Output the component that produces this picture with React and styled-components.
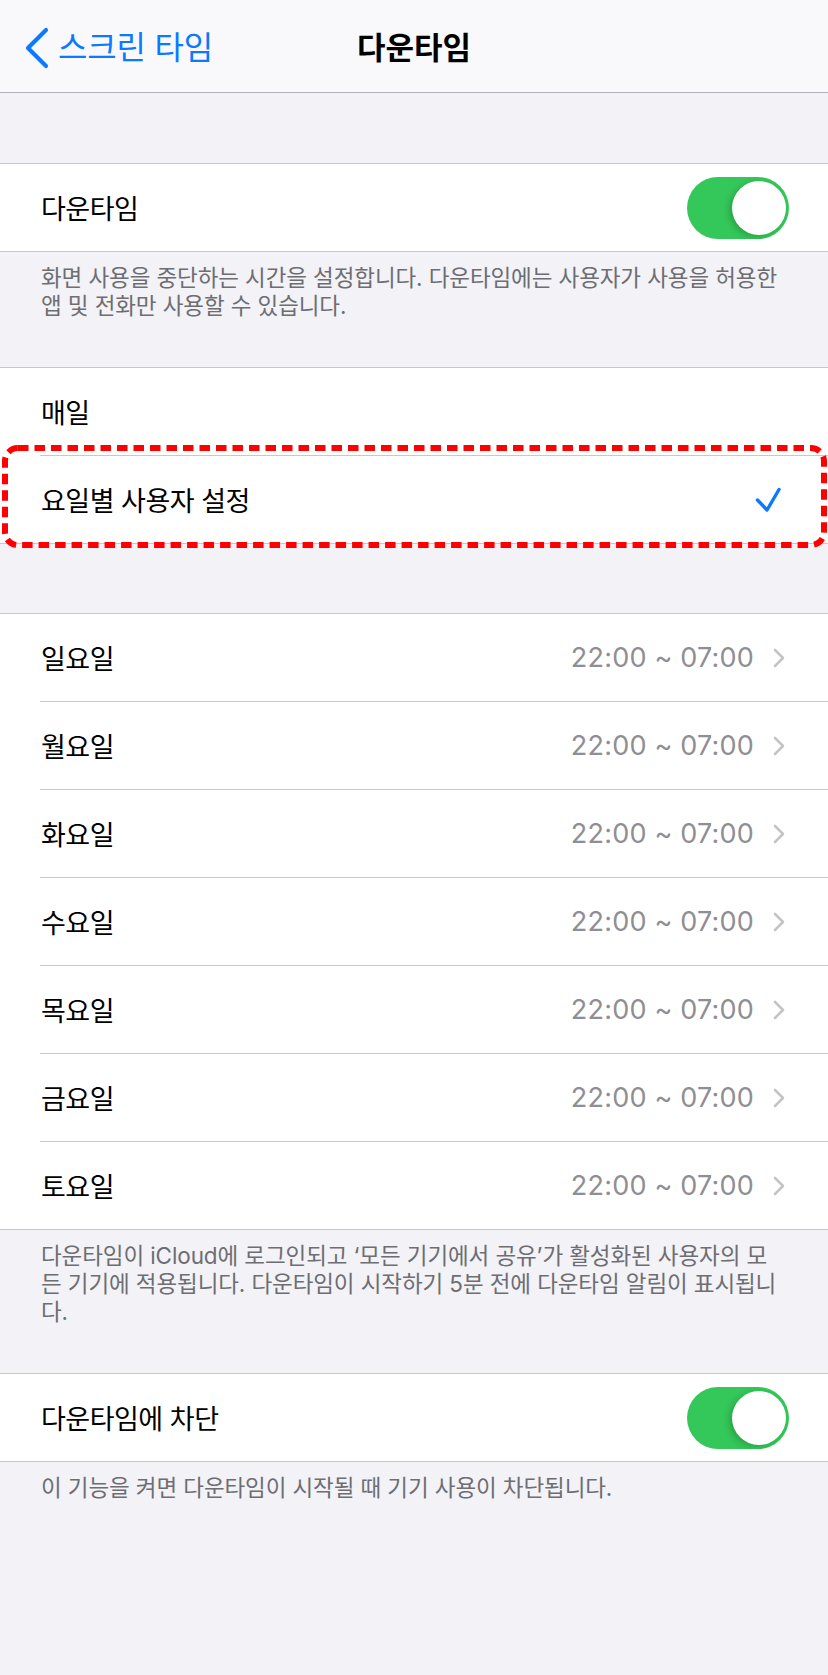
import React from 'react';
import styled, { createGlobalStyle } from 'styled-components';

const days = ['일요일', '월요일', '화요일', '수요일', '목요일', '금요일', '토요일'];

const App = () => (
	<>
		<GlobalStyle />
		<Page>
			<NavBar>
				<BackButton>
					<svg width="26" height="44" viewBox="0 0 26 44">
						<path d="M21 4 L3 22 L21 40" fill="none" stroke="#0a7aff" strokeWidth="4.2" strokeLinecap="round" strokeLinejoin="round" />
					</svg>
					<BackLabel>스크린 타임</BackLabel>
				</BackButton>
				<Title>다운타임</Title>
			</NavBar>

			<Spacer $h={70} />

			<Group>
				<Row>
					<Cell $first>
						<Label>다운타임</Label>
						<Toggle />
					</Cell>
				</Row>
			</Group>
			<Footer>화면 사용을 중단하는 시간을 설정합니다. 다운타임에는 사용자가 사용을 허용한 앱 및 전화만 사용할 수 있습니다.</Footer>

			<Group>
				<Row>
					<Cell $first>
						<Label>매일</Label>
					</Cell>
				</Row>
				<Row>
					<Cell>
						<Label>요일별 사용자 설정</Label>
						<Check width="26" height="26" viewBox="0 0 26 26">
							<path d="M2.5 13 L12 23 L24 2.5" fill="none" stroke="#0a7aff" strokeWidth="3.4" strokeLinecap="round" strokeLinejoin="round" />
						</Check>
					</Cell>
					<Highlight width="825" height="103" viewBox="0 0 825 103">
						<rect x="3" y="3" width="819" height="97" rx="13" fill="none" stroke="#ff0000" strokeWidth="6" strokeDasharray="10.5 6" />
					</Highlight>
				</Row>
			</Group>

			<Spacer $h={69} />

			<Group>
				{days.map((day, i) => (
					<Row key={day}>
						<Cell $first={i === 0}>
							<Label>{day}</Label>
							<Detail>
								<Time>22:00 ~ 07:00</Time>
								<svg width="14" height="22" viewBox="0 0 14 22">
									<path d="M3 3 L11 11 L3 19" fill="none" stroke="#c4c4c7" strokeWidth="2.6" strokeLinecap="round" strokeLinejoin="round" />
								</svg>
							</Detail>
						</Cell>
					</Row>
				))}
			</Group>
			<Footer>다운타임이 iCloud에 로그인되고 ‘모든 기기에서 공유’가 활성화된 사용자의 모든 기기에 적용됩니다. 다운타임이 시작하기 5분 전에 다운타임 알림이 표시됩니다.</Footer>

			<Group>
				<Row>
					<Cell $first>
						<Label>다운타임에 차단</Label>
						<Toggle />
					</Cell>
				</Row>
			</Group>
			<Footer>이 기능을 켜면 다운타임이 시작될 때 기기 사용이 차단됩니다.</Footer>
		</Page>
	</>
);

const Toggle = () => (
	<Switch>
		<Knob />
	</Switch>
);

const GlobalStyle = createGlobalStyle`
	body {
		margin: 0;
		background: #f2f2f7;
		font-family: "Inter", "Noto Sans CJK KR", sans-serif;
		-webkit-font-smoothing: antialiased;
	}
`;

const Page = styled.div`
	width: 828px;
	min-height: 1675px;
	background: #f2f2f7;
`;

const NavBar = styled.div`
	position: relative;
	height: 92px;
	background: #f9f9fb;
	border-bottom: 1px solid #b2b2b6;
	display: flex;
	align-items: center;
	justify-content: center;
`;

const BackButton = styled.div`
	position: absolute;
	left: 25px;
	top: 26px;
	display: flex;
	align-items: center;
	gap: 7px;
	color: #0a7aff;
`;

const BackLabel = styled.span`
	font-size: 32px;
	letter-spacing: -0.2px;
	line-height: 40px;
`;

const Title = styled.h1`
	margin: 0;
	font-size: 31px;
	font-weight: 700;
	letter-spacing: 0;
	color: #000;
	line-height: 40px;
	margin-top: 4px;
`;

const Spacer = styled.div`
	height: ${(p) => p.$h}px;
`;

const Group = styled.div`
	background: #fff;
	border-top: 1px solid #c8c7cc;
	border-bottom: 1px solid #c8c7cc;
`;

const Row = styled.div`
	position: relative;
	padding-left: 40px;
`;

const Cell = styled.div`
	height: 87px;
	display: flex;
	align-items: center;
	justify-content: space-between;
	padding: 0 40px 0 1px;
	border-top: ${(p) => (p.$first ? 'none' : '1px solid #c8c7cc')};
`;

const Label = styled.span`
	font-size: 27px;
	letter-spacing: -0.5px;
	color: #000;
`;

const Check = styled.svg`
	margin-right: 7px;
`;

const Detail = styled.div`
	display: flex;
	align-items: center;
	gap: 18px;
	margin-right: 2px;
`;

const Time = styled.span`
	font-size: 27px;
	color: #8e8e93;
	letter-spacing: 0.2px;
`;

const Switch = styled.div`
	width: 102px;
	height: 62px;
	border-radius: 31px;
	background: #34c759;
	display: flex;
	align-items: center;
	justify-content: flex-end;
	padding-right: 3px;
	box-sizing: border-box;
	margin-right: -1px;
`;

const Knob = styled.div`
	width: 54px;
	height: 54px;
	border-radius: 50%;
	background: #fff;
	box-shadow: -3px 2px 6px rgba(0, 0, 0, 0.18);
`;

const Highlight = styled.svg`
	position: absolute;
	left: 2px;
	top: -10px;
	pointer-events: none;
`;

const Footer = styled.div`
	padding: 12px 41px 47px;
	font-size: 22.5px;
	line-height: 28px;
	color: #6d6d72;
	letter-spacing: -0.1px;
	word-break: break-all;
`;

export default App;
